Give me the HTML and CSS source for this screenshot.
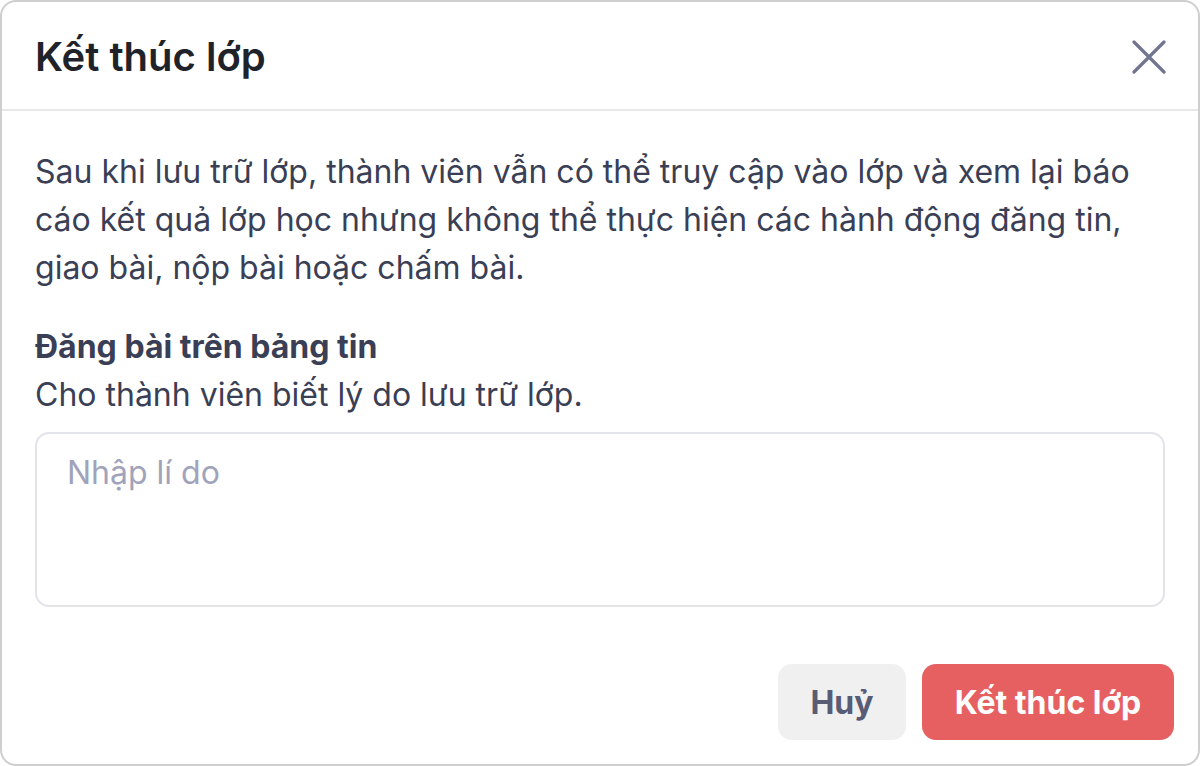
FILE: index.html
```html
<!DOCTYPE html>
<html lang="vi">
<head>
<meta charset="utf-8">
<link rel="stylesheet" href="styles.css">
</head>
<body>
<div class="modal">
  <div class="modal-header">
    <h1 class="modal-title">Kết thúc lớp</h1>
    <button class="close-btn" aria-label="Đóng">
      <svg width="34" height="34" viewBox="0 0 34 34"><path d="M2 2 L32 32 M32 2 L2 32" stroke="#72758f" stroke-width="3.2" stroke-linecap="round" fill="none"/></svg>
    </button>
  </div>
  <div class="modal-body">
    <p class="desc">Sau khi lưu trữ lớp, thành viên vẫn có thể truy cập vào lớp và xem lại báo cáo kết quả lớp học nhưng không thể thực hiện các hành động đăng tin, giao bài, nộp bài hoặc chấm bài.</p>
    <div class="field">
      <div class="label">Đăng bài trên bảng tin</div>
      <div class="hint">Cho thành viên biết lý do lưu trữ lớp.</div>
      <textarea class="reason" placeholder="Nhập lí do"></textarea>
    </div>
  </div>
  <div class="modal-footer">
    <button class="btn btn-cancel">Huỷ</button>
    <button class="btn btn-danger">Kết thúc lớp</button>
  </div>
</div>
</body>
</html>
```
FILE: styles.css
```css
* { box-sizing: border-box; }
html, body { margin: 0; padding: 0; background: #fff; }
body {
  font-family: Inter, "Noto Sans", sans-serif;
}
.modal {
  width: 1200px;
  height: 766px;
  border: 2px solid #cfcfcf;
  border-radius: 16px;
  background: #fff;
  display: flex;
  flex-direction: column;
  overflow: hidden;
}
.modal-header {
  height: 109px;
  flex: none;
  border-bottom: 2px solid #e8e8e8;
  display: flex;
  align-items: center;
  justify-content: space-between;
  padding: 2px 32px 0 33px;
}
.modal-title {
  margin: 0;
  font-size: 40px;
  font-weight: 600;
  color: #1f2329;
}
.close-btn {
  border: 0;
  background: none;
  padding: 0;
  width: 34px;
  height: 34px;
  display: flex;
}
.modal-body {
  padding: 37px 33px 0 33px;
  flex: 1;
}
.desc {
  margin: 0;
  font-size: 32px;
  line-height: 48px;
  color: #3a3f55;
}
.field { margin-top: 31px; }
.label {
  font-size: 32px;
  line-height: 48px;
  font-weight: 700;
  color: #3a3f55;
}
.hint {
  font-size: 32px;
  line-height: 48px;
  color: #3a3f55;
}
.reason {
  display: block;
  margin-top: 13px;
  width: 1130px;
  height: 175px;
  border: 2px solid #e2e4ea;
  border-radius: 14px;
  padding: 19px 30px;
  font-family: inherit;
  font-size: 32px;
  color: #3a3f55;
  resize: none;
  outline: none;
}
.reason::placeholder { color: #a0a3ba; }
.modal-footer {
  display: flex;
  justify-content: flex-end;
  gap: 16px;
  padding: 0 24px 24px 0;
}
.btn {
  height: 76px;
  border: 0;
  border-radius: 14px;
  font-family: inherit;
  font-size: 32px;
  font-weight: 700;
}
.btn-cancel {
  width: 128px;
  background: #f0f0f0;
  color: #585c75;
}
.btn-danger {
  width: 252px;
  background: #e66062;
  color: #fff;
}
```
